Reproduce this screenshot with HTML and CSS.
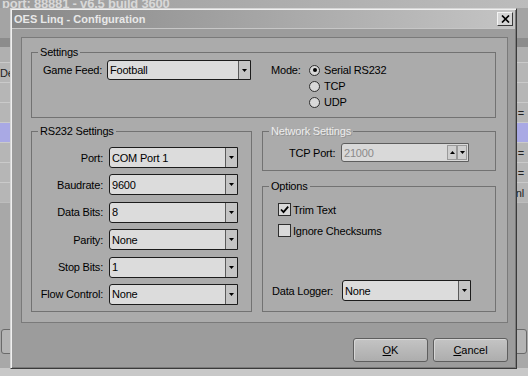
FILE: index.html
```html
<!DOCTYPE html>
<html lang="en">
<head>
<meta charset="UTF-8" />
<meta name="viewport" content="width=device-width, initial-scale=1.0" />
<title>OES Linq - Configuration</title>
<link rel="stylesheet" href="styles.css">
</head>
<body>
  <div class="app">
    <div class="app-title"><span>port: 88881 - v6.5 build 3600</span></div>
    <div class="app-top"></div>
    <div class="app-band"></div>
    <div class="app-head"></div>
    <div class="list-row"><span>De</span><span></span></div>
    <div class="list-row"><span></span><span></span></div>
    <div class="list-row"><span></span><span>=</span></div>
    <div class="list-row sel"><span></span><span></span></div>
    <div class="list-row"><span></span><span>=</span></div>
    <div class="list-row"><span></span><span>=</span></div>
    <div class="list-row"><span></span><span>nl</span></div>
    <div class="app-rest">
      <button class="app-btn"></button>
      <button class="app-btn"></button>
    </div>
    <div class="app-status"></div>
  </div>

  <div class="dialog">
    <div class="dialog-title">
      <span>OES Linq - Configuration</span>
      <button class="close-btn">
        <svg width="9" height="8" viewBox="0 0 9 8"><path d="M1 0.5l7 7M8 0.5l-7 7" stroke="#000" stroke-width="1.7" fill="none"/></svg>
      </button>
    </div>

    <div class="dialog-body">
      <div class="panel">
        <fieldset class="group settings">
          <legend>Settings</legend>
          <div class="group-body settings-row">
            <div class="feed">
              <label class="feed-label">Game Feed:</label>
              <div class="combo feed-combo">
                <span class="combo-text">Football</span>
                <span class="combo-btn"><svg width="5" height="3" viewBox="0 0 5 3"><path d="M0 0h5L2.5 3z"/></svg></span>
              </div>
            </div>
            <div class="mode">
              <span class="mode-label">Mode:</span>
              <div class="radios">
                <div class="radio-row"><span class="radio on"></span>Serial RS232</div>
                <div class="radio-row"><span class="radio"></span>TCP</div>
                <div class="radio-row"><span class="radio"></span>UDP</div>
              </div>
            </div>
          </div>
        </fieldset>

        <div class="lower">
          <fieldset class="group rs232">
            <legend>RS232 Settings</legend>
            <div class="group-body rs232-body">
              <div class="form-row">
                <label>Port:</label>
                <div class="combo"><span class="combo-text">COM Port 1</span><span class="combo-btn"><svg width="5" height="3" viewBox="0 0 5 3"><path d="M0 0h5L2.5 3z"/></svg></span></div>
              </div>
              <div class="form-row">
                <label>Baudrate:</label>
                <div class="combo"><span class="combo-text">9600</span><span class="combo-btn"><svg width="5" height="3" viewBox="0 0 5 3"><path d="M0 0h5L2.5 3z"/></svg></span></div>
              </div>
              <div class="form-row">
                <label>Data Bits:</label>
                <div class="combo"><span class="combo-text">8</span><span class="combo-btn"><svg width="5" height="3" viewBox="0 0 5 3"><path d="M0 0h5L2.5 3z"/></svg></span></div>
              </div>
              <div class="form-row">
                <label>Parity:</label>
                <div class="combo"><span class="combo-text">None</span><span class="combo-btn"><svg width="5" height="3" viewBox="0 0 5 3"><path d="M0 0h5L2.5 3z"/></svg></span></div>
              </div>
              <div class="form-row">
                <label>Stop Bits:</label>
                <div class="combo"><span class="combo-text">1</span><span class="combo-btn"><svg width="5" height="3" viewBox="0 0 5 3"><path d="M0 0h5L2.5 3z"/></svg></span></div>
              </div>
              <div class="form-row">
                <label>Flow Control:</label>
                <div class="combo"><span class="combo-text">None</span><span class="combo-btn"><svg width="5" height="3" viewBox="0 0 5 3"><path d="M0 0h5L2.5 3z"/></svg></span></div>
              </div>
            </div>
          </fieldset>

          <div class="right-col">
            <fieldset class="group network">
              <legend class="disabled">Network Settings</legend>
              <div class="group-body tcp-row">
                <label>TCP Port:</label>
                <div class="spin">
                  <span class="spin-text">21000</span>
                  <span class="spin-btns">
                    <span class="spin-btn"><svg width="5" height="3" viewBox="0 0 5 3"><path d="M0 3h5L2.5 0z"/></svg></span>
                    <span class="spin-btn"><svg width="5" height="3" viewBox="0 0 5 3"><path d="M0 0h5L2.5 3z"/></svg></span>
                  </span>
                </div>
              </div>
            </fieldset>

            <fieldset class="group options">
              <legend>Options</legend>
              <div class="group-body options-body">
                <div class="check-row">
                  <span class="check"><svg width="11" height="11" viewBox="0 0 11 11"><path d="M2 5.5l2.5 2.6L9.2 2.6" stroke="#000" stroke-width="1.8" fill="none"/></svg></span>
                  Trim Text
                </div>
                <div class="check-row">
                  <span class="check"></span>
                  Ignore Checksums
                </div>
                <div class="logger-row">
                  <label>Data Logger:</label>
                  <div class="combo"><span class="combo-text">None</span><span class="combo-btn"><svg width="5" height="3" viewBox="0 0 5 3"><path d="M0 0h5L2.5 3z"/></svg></span></div>
                </div>
              </div>
            </fieldset>
          </div>
        </div>
      </div>

      <div class="dialog-foot">
        <button class="btn"><u>O</u>K</button>
        <button class="btn"><u>C</u>ancel</button>
      </div>
    </div>
  </div>
</body>
</html>
```

FILE: styles.css
```css
* {
  box-sizing: border-box;
}

body {
  margin: 0;
  font-family: "Liberation Sans", Arial, sans-serif;
  font-size: 11px;
  letter-spacing: -0.2px;
  color: #000;
  background: #a8a8a8;
}

/* window behind the dialog */
.app {
  width: 528px;
  height: 376px;
  display: flex;
  flex-direction: column;
  overflow: hidden;
}

.app-title {
  height: 8px;
  background: linear-gradient(to right, #9c9c9c, #bcbcbc);
  overflow: hidden;
  display: flex;
  align-items: flex-end;
  padding-left: 2px;
}

.app-title span {
  font-weight: bold;
  font-size: 13px;
  line-height: 13px;
  margin-bottom: -2px;
  color: #d8d8d8;
  white-space: nowrap;
}

.app-top {
  height: 30px;
  background: #a4a4a4;
}

.app-band {
  height: 9px;
  background: #8c8c8c;
}

.app-head {
  height: 15px;
  background: #b0b0b0;
}

.list-row {
  height: 20px;
  display: flex;
  justify-content: space-between;
  align-items: center;
  padding: 0 4px 0 0;
  background: #b6b6b6;
  border-top: 1px solid #cacaca;
  color: #222;
}

.list-row.sel {
  background: #a9a9e4;
}

.app-rest {
  flex: 1;
  display: flex;
  justify-content: space-between;
  align-items: flex-start;
  padding: 126px 1px 0 1px;
  background: #a8a8a8;
  border-top: 1px solid #bdbdbd;
}

.app-btn {
  width: 60px;
  height: 25px;
  border: 1px solid #6a6a6a;
  border-radius: 3px;
  background: #b4b4b4;
}

.app-status {
  height: 8px;
  background: #c8c8c8;
}

/* dialog */
.dialog {
  position: absolute;
  left: 10px;
  top: 8px;
  width: 507px;
  height: 361px;
  padding: 1px;
  background: #9c9c9c;
  border: 1px solid;
  border-color: #d6d6d6 #3a3a3a #3a3a3a #d6d6d6;
  box-shadow: inset 1px 1px 0 #f0f0f0, inset -1px -1px 0 #7a7a7a;
  display: flex;
  flex-direction: column;
}

.dialog-title {
  height: 19px;
  display: flex;
  align-items: center;
  justify-content: space-between;
  padding: 0 2px 0 2px;
  background: linear-gradient(to right, #888888, #c4c4c4);
  border-bottom: 1px solid #c6c6c6;
  color: #e8e8e8;
  font-weight: bold;
  letter-spacing: 0;
}

.close-btn {
  width: 16px;
  height: 14px;
  padding: 0;
  display: flex;
  align-items: center;
  justify-content: center;
  background: #d6d6d6;
  border: 1px solid;
  border-color: #f4f4f4 #3a3a3a #3a3a3a #f4f4f4;
}

.dialog-body {
  flex: 1;
  padding: 8px 7px 0 9px;
  display: flex;
  flex-direction: column;
}

.panel {
  height: 286px;
  padding: 8px 11px 10px 9px;
  background: #ababab;
  border: 1px solid #7a7a7a;
  display: flex;
  flex-direction: column;
  gap: 7px;
}

/* group boxes */
.group {
  margin: 0;
  padding: 0;
  min-width: 0;
  border: 1px solid #727272;
}

.group legend {
  margin-left: 6px;
  padding: 0 2px;
  line-height: 13px;
}

.group legend.disabled {
  color: #ededed;
  text-shadow: 1px 1px 0 #949494;
}

.settings-row {
  display: flex;
  align-items: flex-start;
  padding: 1px 8px 7px 11px;
}

.feed {
  display: flex;
  align-items: center;
}

.feed-label {
  width: 64px;
}

.mode {
  display: flex;
  margin-left: 20px;
  margin-top: 2px;
}

.mode-label {
  width: 38px;
  line-height: 16px;
}

.radio-row {
  height: 16px;
  display: flex;
  align-items: center;
  gap: 4px;
}

.radio {
  width: 11px;
  height: 11px;
  border-radius: 50%;
  border: 1px solid #2e2e2e;
  background: #d8d8d8;
  display: flex;
  align-items: center;
  justify-content: center;
}

.radio.on::after {
  content: "";
  width: 4px;
  height: 4px;
  border-radius: 50%;
  background: #000;
}

.lower {
  flex: 1;
  display: grid;
  grid-template-columns: 221px 1fr;
  gap: 10px;
}

/* combo box */
.combo {
  width: 129px;
  height: 21px;
  display: flex;
  background: #dcdcdc;
  border: 1px solid #1c1c1c;
  border-radius: 3px 0 0 3px;
}

.combo.feed-combo {
  width: 144px;
  height: 20px;
}

.combo-text {
  flex: 1;
  padding-left: 2px;
  display: flex;
  align-items: center;
}

.combo-btn {
  width: 12px;
  background: #c4c4c4;
  border-left: 1px solid #5a5a5a;
  display: flex;
  align-items: center;
  justify-content: center;
}

.rs232-body {
  padding: 9px 6px 6px 6px;
  display: flex;
  flex-direction: column;
  gap: 6.4px;
}

.form-row {
  display: flex;
  align-items: center;
  gap: 6px;
}

.form-row label {
  width: 65px;
  text-align: right;
}

.right-col {
  display: flex;
  flex-direction: column;
  gap: 9px;
}

.tcp-row {
  display: flex;
  align-items: center;
  padding: 5px 8px 8px 26px;
}

.tcp-row label {
  width: 52px;
}

.spin {
  width: 128px;
  height: 19px;
  display: flex;
  background: #d9d9d9;
  border: 1px solid #5e5e5e;
  border-radius: 3px 0 0 3px;
  color: #8a8a8a;
}

.spin-text {
  flex: 1;
  padding-left: 2px;
  display: flex;
  align-items: center;
}

.spin-btns {
  display: flex;
  padding: 1px;
}

.spin-btn {
  width: 10px;
  background: #cfcfcf;
  border: 1px solid #9a9a9a;
  display: flex;
  align-items: center;
  justify-content: center;
}

.options {
  flex: 1;
  display: flex;
  flex-direction: column;
}

.options-body {
  flex: 1;
  padding: 6px 8px 10px 9px;
  display: flex;
  flex-direction: column;
}

.check-row {
  height: 21px;
  margin-left: 6px;
  display: flex;
  align-items: center;
  gap: 2px;
}

.check {
  width: 13px;
  height: 13px;
  border: 1px solid #2e2e2e;
  background: #d9d9d9;
  display: flex;
  align-items: center;
  justify-content: center;
}

.logger-row {
  margin-top: auto;
  display: flex;
  align-items: center;
}

.logger-row label {
  width: 70px;
}

.dialog-foot {
  display: flex;
  justify-content: flex-end;
  gap: 5px;
  padding-top: 15px;
}

.btn {
  width: 75px;
  height: 24px;
  font: inherit;
  letter-spacing: 0;
  color: #000;
  border: 1px solid #5e5e5e;
  border-radius: 3px;
  background: linear-gradient(#c4c4c4, #adadad);
  box-shadow: inset 1px 1px 0 #d6d6d6;
}
```
